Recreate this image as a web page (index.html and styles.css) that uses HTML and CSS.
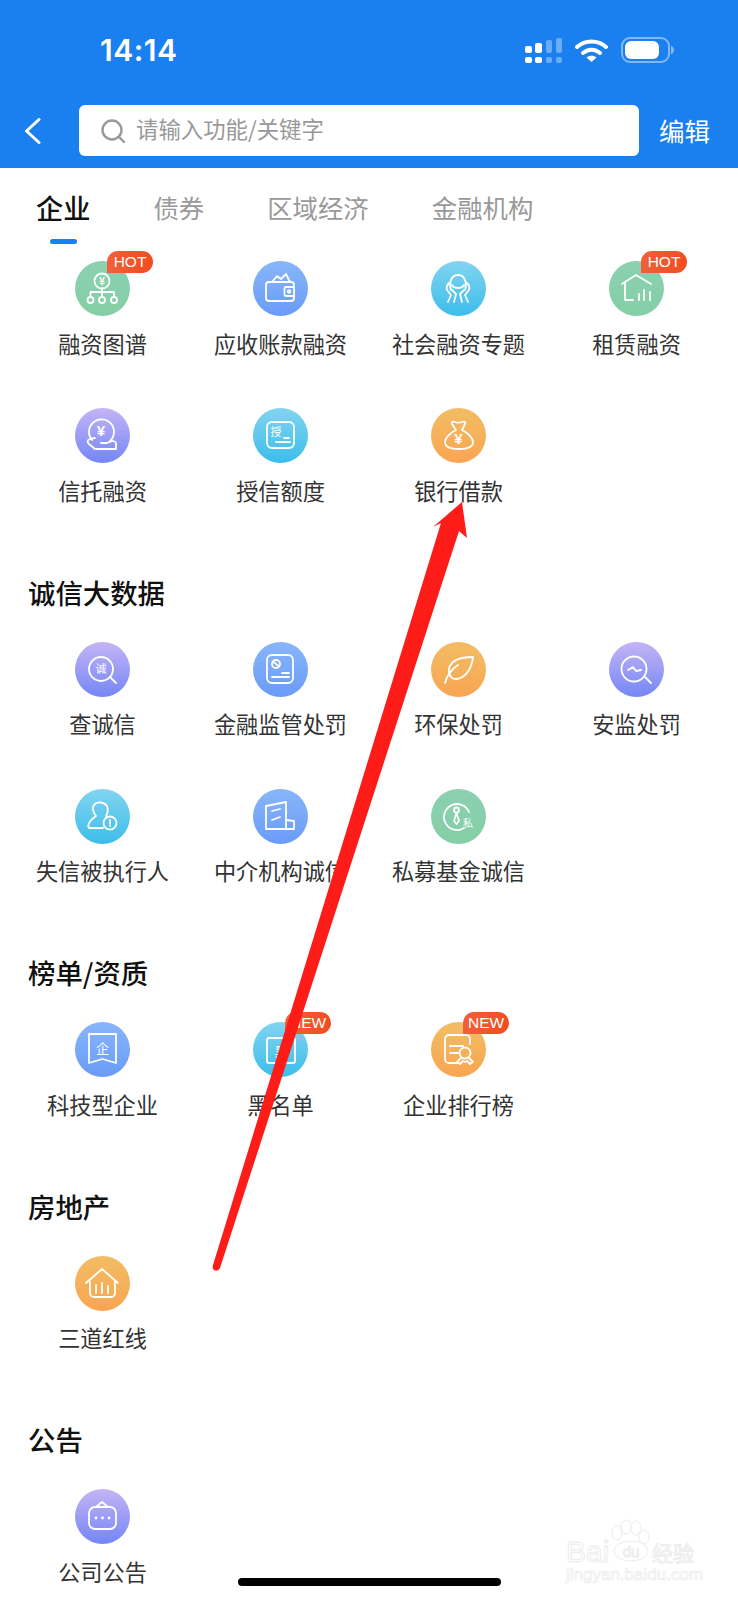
FILE: index.html
```html
<!doctype html>
<html>
    <head>
        <meta charset="utf-8">
        <meta name="viewport" content="width=device-width,user-scalable=no,initial-scale=1.0">
        <title>全部功能</title>
        <link rel="stylesheet" href="styles.css">
    </head>
    <body>
        <section class="page">
            <header class="top">
                <div class="status">
                    <span class="time">14:14</span>
                    <div class="status-icons">
                        <svg class="signal" width="37" height="25" viewBox="0 0 37 25">
                            <rect x="0" y="8" width="7" height="7" rx="2"/><rect x="10" y="5" width="7" height="10" rx="2"/>
                            <rect x="0" y="19" width="7" height="6" rx="2"/><rect x="10" y="19" width="7" height="6" rx="2"/>
                            <g opacity=".35"><rect x="21" y="2" width="6" height="13" rx="2"/><rect x="31" y="0" width="6" height="15" rx="2"/>
                            <rect x="21" y="19" width="6" height="6" rx="2"/><rect x="31" y="19" width="6" height="6" rx="2"/></g>
                        </svg>
                        <svg class="wifi" width="33" height="24" viewBox="0 0 33 24">
                            <path d="M2 9c8-7.500 21-7.500 29 0" /><path d="M8 15c5-4.500 12-4.500 17 0"/>
                            <path class="wifi-dot" d="M11.500 19.500c3-2.500 7-2.500 10 0l-5 4.500z"/>
                        </svg>
                        <svg class="battery" width="53" height="26" viewBox="0 0 53 26">
                            <rect class="battery-case" x="1" y="1" width="47" height="24" rx="8"/>
                            <rect class="battery-fill" x="4" y="4" width="34" height="18" rx="6"/>
                            <path class="battery-nub" d="M50 9c2 0 3 2 3 4s-1 4-3 4z"/>
                        </svg>
                    </div>
                </div>
                <div class="nav">
                    <svg class="back" width="17" height="26" viewBox="0 0 17 26"><path d="M15 1.500 2.500 13 15 24.500"/></svg>
                    <div class="search">
                        <svg class="search-icon" width="25" height="24" viewBox="0 0 25 24"><circle cx="11" cy="11" r="9.500"/><path d="m18 18 5 5"/></svg>
                        <span>请输入功能/关键字</span>
                    </div>
                    <span class="edit">编辑</span>
                </div>
            </header>

            <nav class="tabs">
                <div class="tab active">企业<i></i></div>
                <div class="tab">债券</div>
                <div class="tab">区域经济</div>
                <div class="tab">金融机构</div>
            </nav>

            <div class="grid">
                <div class="item">
                    <div class="icon green">
                        <svg viewBox="0 0 55 55"><circle cx="27" cy="20" r="7.500"/><text x="27" y="23.500" class="tiny">¥</text><path d="M27 27.500V36M15.500 36v-5h23.500v5"/><circle cx="15.500" cy="39" r="3"/><circle cx="27" cy="39" r="3"/><circle cx="39" cy="39" r="3"/></svg>
                        <b class="badge">HOT</b>
                    </div>
                    <p>融资图谱</p>
                </div>
                <div class="item">
                    <div class="icon blue">
                        <svg viewBox="0 0 55 55"><rect x="13" y="21" width="28" height="19" rx="3"/><path d="M41 26h-8a1.500 1.500 0 0 0-1.500 1.500v6A1.500 1.500 0 0 0 33 35h8"/><circle cx="36" cy="30.500" r="1.300"/><path d="m19 21 5-6 4 3 5-5 4 8"/></svg>
                    </div>
                    <p>应收账款融资</p>
                </div>
                <div class="item">
                    <div class="icon cyan">
                        <svg viewBox="0 0 55 55"><path d="M20 29c-2-5-1-15 7-15s9 10 7 15"/><path d="M21 24c2 4 10 4 12 0"/><path d="M17 41l3-7-4-5c-1-3 0-5 2-7"/><path d="M23 41l2-8-4-4"/><path d="M37 41l-3-7 4-5c1-3 0-5-2-7"/><path d="M31 41l-2-8 4-4"/></svg>
                    </div>
                    <p>社会融资专题</p>
                </div>
                <div class="item">
                    <div class="icon green">
                        <svg viewBox="0 0 55 55"><path d="M13 23 27 14l15 9"/><path d="M16 21v18h8"/><path d="M30 33v6M35 29v10M41 31v8"/></svg>
                        <b class="badge">HOT</b>
                    </div>
                    <p>租赁融资</p>
                </div>
                <div class="item">
                    <div class="icon purple">
                        <svg viewBox="0 0 55 55"><path d="M17 32a12.500 12.500 0 1 1 18 1"/><text x="26" y="28" class="yuan">¥</text><path d="M20 30l-5 1c-3 1-3 3-1 5l6 5h21v-6c-1-3-5-2-9 0h-6"/></svg>
                    </div>
                    <p>信托融资</p>
                </div>
                <div class="item">
                    <div class="icon cyan">
                        <svg viewBox="0 0 55 55"><rect x="14" y="14" width="27" height="26" rx="5"/><text x="23" y="28" class="glyph">授</text><path d="M23 34h14M31 30h5"/></svg>
                    </div>
                    <p>授信额度</p>
                </div>
                <div class="item">
                    <div class="icon orange">
                        <svg viewBox="0 0 55 55"><path d="M21 16c-1-2 1-3 3-2 2 .800 5 .800 7 0 2-1 4 0 3 2l-3 6c6 3 11 8 11 12 0 5-6 7-14 7s-14-2-14-7c0-4 5-9 11-12z"/><text x="27.500" y="36" class="yuan">¥</text></svg>
                    </div>
                    <p>银行借款</p>
                </div>
            </div>

            <h2>诚信大数据</h2>
            <div class="grid">
                <div class="item">
                    <div class="icon purple">
                        <svg viewBox="0 0 55 55"><circle cx="26" cy="27" r="12"/><path d="m35 35 6 6"/><text x="26" y="31" class="glyph">诚</text></svg>
                    </div>
                    <p>查诚信</p>
                </div>
                <div class="item">
                    <div class="icon blue">
                        <svg viewBox="0 0 55 55"><rect x="14" y="13" width="26" height="28" rx="5"/><circle cx="23" cy="22" r="4"/><path d="m20 19.500 6 5M29 31h7M19 35h17"/></svg>
                    </div>
                    <p>金融监管处罚</p>
                </div>
                <div class="item">
                    <div class="icon orange">
                        <svg viewBox="0 0 55 55"><path d="M42 15c-10 0-22 2-24 12-1 6 3 11 8 10 10-2 15-12 16-22z"/><path d="M14 41c2-8 7-14 13-18"/></svg>
                    </div>
                    <p>环保处罚</p>
                </div>
                <div class="item">
                    <div class="icon purple">
                        <svg viewBox="0 0 55 55"><circle cx="25" cy="27" r="12.500"/><path d="m36 35 6 6"/><path d="m19 28 5-3 3 4 5-1"/></svg>
                    </div>
                    <p>安监处罚</p>
                </div>
                <div class="item">
                    <div class="icon cyan">
                        <svg viewBox="0 0 55 55"><path d="M28 39H14c-2-3 0-7 7-12-3-4-4-8-2-11 3-4 10-3 13 1 1 3 1 7-1 10"/><circle cx="35" cy="34" r="6.500"/><path d="M35 31v3.500M35 36.500v.500"/></svg>
                    </div>
                    <p>失信被执行人</p>
                </div>
                <div class="item">
                    <div class="icon blue">
                        <svg viewBox="0 0 55 55"><path d="M13 17 33 13v27H13z"/><path d="m19 22 8-2M19 31l8-3"/><path d="M33 31l8 1v8h-8"/></svg>
                    </div>
                    <p>中介机构诚信</p>
                </div>
                <div class="item">
                    <div class="icon green">
                        <svg viewBox="0 0 55 55"><path d="M33 39a13 13 0 1 1 5-16"/><circle cx="25.500" cy="21" r="2.500"/><path d="m25.500 24-2.500 8 2.500 3 2.500-3z"/><text x="37" y="38" class="glyph small">私</text></svg>
                    </div>
                    <p>私募基金诚信</p>
                </div>
            </div>

            <h2>榜单/资质</h2>
            <div class="grid">
                <div class="item">
                    <div class="icon blue">
                        <svg viewBox="0 0 55 55"><path d="M14 12h27v29l-13.500-4L14 41z"/><text x="27.500" y="31" class="glyph big">企</text></svg>
                    </div>
                    <p>科技型企业</p>
                </div>
                <div class="item">
                    <div class="icon cyan">
                        <svg viewBox="0 0 55 55"><rect x="14" y="16" width="28" height="25" rx="2"/><text x="28" y="34" class="glyph big">黑</text></svg>
                        <b class="badge">NEW</b>
                    </div>
                    <p>黑名单</p>
                </div>
                <div class="item">
                    <div class="icon orange">
                        <svg viewBox="0 0 55 55"><path d="M39 22v-5a4 4 0 0 0-4-4H18a4 4 0 0 0-4 4v20a4 4 0 0 0 4 4h9"/><path d="M19 24h13M19 31h8"/><circle cx="34" cy="31" r="5.500"/><path d="m30 36-4 4 3 2 3-3 2 1 2-1 3 3 3-2-4-4"/></svg>
                        <b class="badge">NEW</b>
                    </div>
                    <p>企业排行榜</p>
                </div>
            </div>

            <h2>房地产</h2>
            <div class="grid">
                <div class="item">
                    <div class="icon orange">
                        <svg viewBox="0 0 55 55"><path d="M11 27 27 13l16 14"/><path d="M15 26v11a4 4 0 0 0 4 4h17a4 4 0 0 0 4-4V26"/><path d="M21 29v8M27 27v10M33 30v7"/></svg>
                    </div>
                    <p>三道红线</p>
                </div>
            </div>

            <h2>公告</h2>
            <div class="grid">
                <div class="item">
                    <div class="icon purple">
                        <svg viewBox="0 0 55 55"><path d="M20 18h15a6 6 0 0 1 6 6v10a6 6 0 0 1-6 6H20a6 6 0 0 1-6-6V24a6 6 0 0 1 6-6z"/><path d="m21 18 6-5 6 5"/><circle class="dot" cx="21" cy="29" r="1.400"/><circle class="dot" cx="27.500" cy="29" r="1.400"/><circle class="dot" cx="34" cy="29" r="1.400"/></svg>
                    </div>
                    <p>公司公告</p>
                </div>
            </div>

            <div class="watermark">
                <svg width="134" height="58" viewBox="0 -12 134 58">
                    <text x="0" y="42" class="wm-text">Bai</text>
                    <ellipse cx="65" cy="31" rx="17" ry="10"/>
                    <text x="65" y="37" class="wm-du">du</text>
                    <ellipse cx="51" cy="13" rx="5" ry="7"/><ellipse cx="60" cy="7" rx="5" ry="7"/><ellipse cx="70" cy="8" rx="5" ry="7"/><ellipse cx="78" cy="17" rx="5" ry="7"/>
                    <text x="86" y="41" class="wm-cn">经验</text>
                </svg>
                <span>jingyan.baidu.com</span>
            </div>
            <div class="home-bar"></div>

            <svg class="arrow" width="738" height="1600" viewBox="0 0 738 1600">
                <path d="M462 502 467 538 459 531 220 1268Q218 1272 214 1270 212 1268 213 1265L441 523 433 527z"/>
            </svg>
        </section>
    </body>
</html>
```

FILE: styles.css
```css
*{
    margin: 0px;
    padding: 0px;
    box-sizing: border-box;
}
html,body{
    height: 100%;
}
body{
    background-color: #fff;
    font-family: "Noto Sans CJK SC", "Liberation Sans", sans-serif;
    color: #333;
}
.page{
    position: relative;
    width: 738px;
    height: 1600px;
    overflow: hidden;
}

/* blue top area */
.top{
    height: 168px;
    background-color: #1a80f0;
    color: #fff;
}
.status{
    height: 100px;
    padding: 0 64px 0 100px;
    display: flex;
    align-items: center;
    justify-content: space-between;
}
.time{
    font-family: Inter, "Liberation Sans", sans-serif;
    font-size: 30px;
    font-weight: 600;
    letter-spacing: 0.5px;
}
.status-icons{
    display: flex;
    align-items: center;
    gap: 13px;
}
.signal{
    fill: #fff;
}
.wifi{
    fill: none;
    stroke: #fff;
    stroke-width: 4;
    stroke-linecap: round;
}
.wifi .wifi-dot{
    fill: #fff;
    stroke: none;
}
.battery-case{
    fill: none;
    stroke: #fff;
    stroke-opacity: .45;
    stroke-width: 2;
}
.battery-fill{
    fill: #fff;
}
.battery-nub{
    fill: #fff;
    opacity: .45;
}
.nav{
    margin-top: 5px;
    height: 51px;
    padding: 0 28px 0 24px;
    display: flex;
    align-items: center;
}
.back{
    fill: none;
    stroke: #fff;
    stroke-width: 3;
    stroke-linecap: round;
    stroke-linejoin: round;
}
.search{
    width: 560px;
    height: 51px;
    margin-left: 38px;
    padding-left: 22px;
    display: flex;
    align-items: center;
    gap: 10px;
    background-color: #fff;
    border-radius: 6px;
    color: #999;
    font-size: 22.400px;
}
.search span{
    padding-bottom: 5px;
}
.search-icon{
    fill: none;
    stroke: #999;
    stroke-width: 2.4;
    stroke-linecap: round;
}
.edit{
    margin-left: auto;
    padding-bottom: 2px;
    font-size: 25.500px;
    line-height: 49px;
}

/* tabs */
.tabs{
    height: 77px;
    padding: 19px 0 0 36px;
    display: flex;
    gap: 63px;
}
.tab{
    display: flex;
    flex-direction: column;
    align-items: center;
    font-size: 25.400px;
    line-height: 40px;
    color: #999;
}
.tab.active{
    font-size: 27.200px;
    font-weight: 500;
    color: #111;
}
.tab i{
    display: block;
    width: 27px;
    height: 5px;
    margin-top: 12px;
    border-radius: 3px;
    background-color: #1a80f0;
}

/* function grids */
.grid{
    padding: 16px 12px 0 13.500px;
    display: grid;
    grid-template-columns: repeat(4, 178px);
    grid-auto-rows: 147px;
}
h2{
    height: 40px;
    margin-top: 16.600px;
    padding-left: 28px;
    font-size: 27.400px;
    font-weight: 500;
    line-height: 40px;
    color: #111;
}
h2 + .grid{
    padding-top: 30px;
}
.item{
    display: flex;
    flex-direction: column;
    align-items: center;
}
.item p{
    margin-top: 11.500px;
    font-size: 22.200px;
    line-height: 30px;
    white-space: nowrap;
}
.icon{
    position: relative;
    width: 55px;
    height: 55px;
    border-radius: 50%;
}
.icon svg{
    display: block;
    width: 55px;
    height: 55px;
    fill: none;
    stroke: #fff;
    stroke-width: 1.800;
    stroke-linecap: round;
    stroke-linejoin: round;
}
.icon text{
    fill: #fff;
    stroke: none;
    text-anchor: middle;
}
.icon .dot{
    fill: #fff;
    stroke: none;
}
.tiny{
    font-family: "Liberation Sans", sans-serif;
    font-size: 10px;
    font-weight: 700;
}
.yuan{
    font-family: "Liberation Sans", sans-serif;
    font-size: 15px;
    font-weight: 700;
}
.glyph{
    font-size: 11px;
}
.glyph.small{
    font-size: 10px;
}
.glyph.big{
    font-size: 13px;
}
.green{
    background: linear-gradient(180deg, #8cd0b0, #84cfa6);
}
.blue{
    background: linear-gradient(180deg, #88b6fa, #6a9bf8);
}
.cyan{
    background: linear-gradient(180deg, #82d4f0, #3cbdea);
}
.purple{
    background: linear-gradient(180deg, #c4b4f5, #7486f6);
}
.orange{
    background: linear-gradient(180deg, #f2bd64, #f9a552);
}
.badge{
    position: absolute;
    left: 32px;
    top: -10px;
    min-width: 46px;
    height: 22px;
    padding: 0 5px;
    border-radius: 11px 11px 11px 0;
    background: linear-gradient(90deg, #f1603a, #f04d1f);
    color: #fff;
    font-family: "Liberation Sans", sans-serif;
    font-size: 15.500px;
    font-weight: 400;
    line-height: 22px;
    text-align: center;
}

/* things lying over the page */
.home-bar{
    position: absolute;
    left: 238px;
    top: 1578px;
    width: 263px;
    height: 8px;
    border-radius: 4px;
    background-color: #000;
}
.watermark{
    position: absolute;
    left: 566px;
    top: 1508px;
    width: 134px;
}
.watermark svg{
    display: block;
    fill: #fff;
    stroke: #ececec;
    stroke-width: 1;
}
.watermark text{
    font-family: "Liberation Sans", sans-serif;
}
.watermark .wm-text{
    font-size: 30px;
}
.watermark .wm-du{
    font-size: 15px;
    text-anchor: middle;
}
.watermark .wm-cn{
    font-family: "Noto Sans CJK SC", sans-serif;
    font-size: 21px;
}
.watermark span{
    display: block;
    font-family: "Liberation Sans", sans-serif;
    font-size: 17px;
    line-height: 18px;
    white-space: nowrap;
    color: #fff;
    -webkit-text-stroke: 0.7px #ececec;
}
.arrow{
    position: absolute;
    left: 0;
    top: 0;
    fill: #fd1c17;
}
```
